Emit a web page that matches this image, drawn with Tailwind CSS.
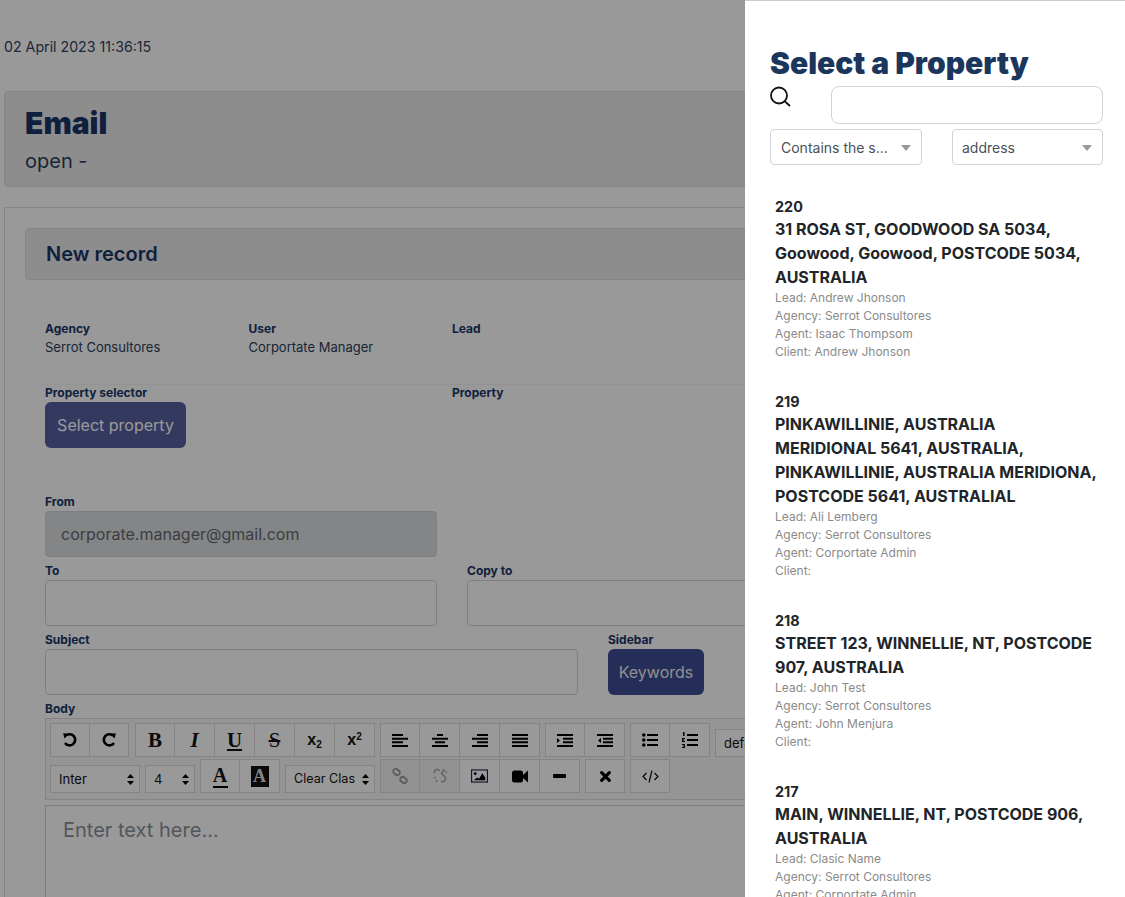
<!DOCTYPE html>
<html lang="en">
<head>
  <meta charset="UTF-8" />
  <meta name="viewport" content="width=device-width, initial-scale=1" />
  <title>Email</title>
  <script src="https://cdn.jsdelivr.net/npm/@tailwindcss/browser@4"></script>
</head>
<body class="relative h-[897px] w-[1125px] overflow-hidden bg-white font-[family-name:Inter,sans-serif] text-[#1a3668]">
  <!-- page behind the drawer -->
  <div class="w-[1125px] pl-1">
    <p class="pt-[38px] h-[91px] text-[14.2px] leading-[18px] text-[#33415c]">02 April 2023 11:36:15</p>

    <div class="h-[96px] border border-[#dedede] rounded bg-[#ececec] pl-5 pt-[13px]">
      <h1 class="text-3xl leading-9 font-black">Email</h1>
      <p class="mt-[8px] text-xl leading-6 text-[#2a3d5c]">open -</p>
    </div>

    <div class="mt-5 border border-[#dedede] pl-5 pt-5 h-[700px]">
      <div class="h-[52px] border border-[#dedede] rounded bg-[#ececec] pl-5 flex items-center">
        <h2 class="text-xl font-semibold">New record</h2>
      </div>

      <div class="ml-5">
        <div class="mt-[41px] grid grid-cols-[203.5px_203.5px_200px] text-xs">
          <div><div class="font-bold leading-[16px]">Agency</div><div class="mt-[2px] text-[13px] leading-4 text-[#2a3d5c]">Serrot Consultores</div></div>
          <div><div class="font-bold leading-[16px]">User</div><div class="mt-[2px] text-[13px] leading-4 text-[#2a3d5c]">Corportate Manager</div></div>
          <div class="font-bold leading-[16px]">Lead</div>
        </div>

        <div class="mt-[29px] w-[720px] border-t border-[#f5f5f5] grid grid-cols-[407px_200px] text-xs font-bold leading-[16px]">
          <div>
            <div>Property selector</div>
            <button class="mt-[1px] w-[141px] h-[46px] rounded-md bg-[#555f9e] text-base font-normal text-white">Select property</button>
          </div>
          <div>Property</div>
        </div>

        <label class="block mt-[46px] text-xs font-bold leading-[16px]">From</label>
        <div class="mt-[1px] w-[392px] h-[46px] border border-[#d0d4d9] rounded bg-[#dadee1] pl-[15px] flex items-center text-base text-[#64686f]">corporate.manager@gmail.com</div>

        <div class="mt-[6px] flex gap-[30px] text-xs font-bold leading-[16px]">
          <div><div>To</div><div class="mt-[1px] w-[392px] h-[46px] border border-[#d0d4d9] rounded"></div></div>
          <div><div>Copy to</div><div class="mt-[1px] w-[400px] h-[46px] border border-[#d0d4d9] rounded"></div></div>
        </div>

        <div class="mt-[6px] flex gap-[30px] text-xs font-bold leading-[16px]">
          <div><div>Subject</div><div class="mt-[1px] w-[533px] h-[46px] border border-[#d0d4d9] rounded"></div></div>
          <div>
            <div>Sidebar</div>
            <button class="mt-[1px] w-[96px] h-[46px] rounded-md bg-[#3f4b94] text-base font-normal text-[#eeeeee]">Keywords</button>
          </div>
        </div>

        <label class="block mt-[6px] text-xs font-bold leading-[16px]">Body</label>
        <div class="mt-[1px] w-[800px] h-[82px] border border-[#dcdcdc] bg-[#f8f8f8] pl-1 pt-1 text-[#111111]">
          <div class="flex gap-[5px] h-[36px]">
            <div class="flex">
              <button class="w-10 h-[34px] border border-[#dcdcdc] bg-white flex items-center justify-center">
                <svg class="w-4 h-4" viewBox="0 0 16 16" fill="none" stroke="black" stroke-width="2.600"><path d="M4 3.500 A5.600 5.600 0 1 1 3 11"/><path d="M1.200 1.200 L7 1.800 L2.400 6.600 Z" fill="black" stroke="none"/></svg>
              </button>
              <button class="-ml-px w-10 h-[34px] border border-[#dcdcdc] bg-white flex items-center justify-center">
                <svg class="w-4 h-4" viewBox="0 0 16 16" fill="none" stroke="black" stroke-width="2.600"><path d="M12 3.500 A5.600 5.600 0 1 0 13 11"/><path d="M14.800 1.200 L9 1.800 L13.600 6.600 Z" fill="black" stroke="none"/></svg>
              </button>
            </div>
            <div class="ml-px flex font-[family-name:'Liberation_Serif',serif] text-[21px] leading-none font-bold">
              <button class="w-10 h-[34px] border border-[#dcdcdc] bg-white">B</button>
              <button class="-ml-px w-[41px] h-[34px] border border-[#dcdcdc] bg-white italic">I</button>
              <button class="-ml-px w-[41px] h-[34px] border border-[#dcdcdc] bg-white underline">U</button>
              <button class="-ml-px w-[41px] h-[34px] border border-[#dcdcdc] bg-white line-through font-normal">S</button>
              <button class="-ml-px w-[41px] h-[34px] border border-[#dcdcdc] bg-white font-[family-name:'Liberation_Sans',sans-serif] text-base">x<sub class="text-[10px]">2</sub></button>
              <button class="-ml-px w-[41px] h-[34px] border border-[#dcdcdc] bg-white font-[family-name:'Liberation_Sans',sans-serif] text-base">x<sup class="text-[10px]">2</sup></button>
            </div>
            <div class="flex">
              <button class="w-10 h-[34px] border border-[#dcdcdc] bg-white flex items-center justify-center">
                <svg class="w-4 h-[13px]" preserveAspectRatio="none" viewBox="0 0 16 16"><path d="M0 0h11v2.500H0zM0 4.500h16V7H0zM0 9h11v2.500H0zM0 13.500h16V16H0z"/></svg>
              </button>
              <button class="-ml-px w-[41px] h-[34px] border border-[#dcdcdc] bg-white flex items-center justify-center">
                <svg class="w-4 h-[13px]" preserveAspectRatio="none" viewBox="0 0 16 16"><path d="M5 0h6v2.500H5zM0 4.500h16V7H0zM3 9h10v2.500H3zM0 13.500h16V16H0z"/></svg>
              </button>
              <button class="-ml-px w-[41px] h-[34px] border border-[#dcdcdc] bg-white flex items-center justify-center">
                <svg class="w-4 h-[13px]" preserveAspectRatio="none" viewBox="0 0 16 16"><path d="M5 0h11v2.500H5zM0 4.500h16V7H0zM5 9h11v2.500H5zM0 13.500h16V16H0z"/></svg>
              </button>
              <button class="-ml-px w-[41px] h-[34px] border border-[#dcdcdc] bg-white flex items-center justify-center">
                <svg class="w-4 h-[13px]" preserveAspectRatio="none" viewBox="0 0 16 16"><path d="M0 0h16v2.500H0zM0 4.500h16V7H0zM0 9h16v2.500H0zM0 13.500h16V16H0z"/></svg>
              </button>
            </div>
            <div class="flex">
              <button class="w-10 h-[34px] border border-[#dcdcdc] bg-white flex items-center justify-center">
                <svg class="w-4 h-[13px]" preserveAspectRatio="none" viewBox="0 0 16 16"><path d="M0 0h16v2.500H0zM6 4.500h10V7H6zM6 9h10v2.500H6zM0 13.500h16V16H0zM0 5l3 3-3 3z"/></svg>
              </button>
              <button class="-ml-px w-[41px] h-[34px] border border-[#dcdcdc] bg-white flex items-center justify-center">
                <svg class="w-4 h-[13px]" preserveAspectRatio="none" viewBox="0 0 16 16"><path d="M0 0h16v2.500H0zM6 4.500h10V7H6zM6 9h10v2.500H6zM0 13.500h16V16H0zM4 5L1 8l3 3z"/></svg>
              </button>
            </div>
            <div class="flex">
              <button class="w-10 h-[34px] border border-[#dcdcdc] bg-white flex items-center justify-center">
                <svg class="w-4 h-[14px]" viewBox="0 0 16 14"><circle cx="1.800" cy="2" r="1.800"/><circle cx="1.800" cy="7" r="1.800"/><circle cx="1.800" cy="12" r="1.800"/><path d="M5 1h11v2H5zM5 6h11v2H5zM5 11h11v2H5z"/></svg>
              </button>
              <button class="-ml-px w-[41px] h-[34px] border border-[#dcdcdc] bg-white flex items-center justify-center">
                <svg class="w-4 h-4" viewBox="0 0 16 16"><path d="M5 2h11v2H5zM5 7h11v2H5zM5 12h11v2H5zM1 0h1.500v4H1zM0 6h3v1.200H1.500V9H3v1H0zM0 12h3v4H0v-1h2v-.600H.800v-.800H2V13H0z"/></svg>
              </button>
            </div>
            <div class="mt-[6px] w-[80px] h-7 border border-[#dcdcdc] bg-white pl-2 text-[13px] leading-[26px]">default</div>
          </div>

          <div class="flex gap-[5px] h-[34px] text-[13px]">
            <div class="mt-[6px] w-[90px] h-7 border border-[#dcdcdc] bg-white pl-2 pr-[5px] pt-[1px] flex items-center justify-between"><span>Inter</span><svg class="w-[7px] h-[11px]" viewBox="0 0 7 11"><path d="M3.500 0L7 4H0zM3.500 11L0 7h7z"/></svg></div>
            <div class="mt-[6px] w-[50px] h-7 border border-[#dcdcdc] bg-white pl-2 pr-[5px] pt-[1px] flex items-center justify-between"><span>4</span><svg class="w-[7px] h-[11px]" viewBox="0 0 7 11"><path d="M3.500 0L7 4H0zM3.500 11L0 7h7z"/></svg></div>
            <div class="flex font-[family-name:'Liberation_Serif',serif] font-bold text-xl leading-none">
              <button class="w-10 h-[34px] border border-[#dcdcdc] bg-white"><span class="block leading-[21px]">A</span><span class="block mx-auto w-[15px] h-[2px] bg-black"></span></button>
              <button class="-ml-px w-[41px] h-[34px] border border-[#dcdcdc] bg-white flex items-center justify-center"><span class="block w-[18px] h-[21px] bg-[#111111] text-[#dddddd] text-lg leading-[21px]">A</span></button>
            </div>
            <div class="mt-[6px] w-[90px] h-7 border border-[#dcdcdc] bg-white pl-2 pr-[5px] pt-[1px] flex items-center justify-between"><span class="text-[12.600px] whitespace-nowrap">Clear Clas</span><svg class="w-[7px] h-[11px] shrink-0" viewBox="0 0 7 11"><path d="M3.500 0L7 4H0zM3.500 11L0 7h7z"/></svg></div>
            <div class="flex">
              <button class="w-10 h-[34px] border border-[#dcdcdc] bg-[#f3f3f3] flex items-center justify-center">
                <svg class="w-4 h-4" viewBox="0 0 16 16" fill="none" stroke="#999999" stroke-width="1.800"><rect x="1" y="1.500" width="7" height="5" rx="2.500" transform="rotate(40 4.500 4)"/><rect x="8" y="9.500" width="7" height="5" rx="2.500" transform="rotate(40 11.500 12)"/></svg>
              </button>
              <button class="-ml-px w-[41px] h-[34px] border border-[#dcdcdc] bg-[#f3f3f3] flex items-center justify-center">
                <svg class="w-4 h-4" viewBox="0 0 16 16" fill="none" stroke="#aaaaaa" stroke-width="1.600"><path d="M3 5C1 2 6 0 7.500 3M9 13C11 15 15 12 13 9L10 6C9 5 11 2 13 3M2 10l2-.5M4 14l1-2M12 1l-.5 1.500M15 4l-1.500.5"/></svg>
              </button>
              <button class="-ml-px w-[41px] h-[34px] border border-[#dcdcdc] bg-white flex items-center justify-center">
                <svg class="w-[17px] h-[14px]" viewBox="0 0 18 14"><rect x=".600" y=".600" width="16.800" height="12.800" fill="none" stroke="#0d2a4d" stroke-width="1.200"/><circle cx="4.500" cy="4.500" r="1.500"/><path d="M3 11.500l3.500-3 2 1.500 3.500-6 3 4.500v3z"/></svg>
              </button>
              <button class="-ml-px w-[41px] h-[34px] border border-[#dcdcdc] bg-white flex items-center justify-center">
                <svg class="w-4 h-[13px]" viewBox="0 0 16 13"><rect x="0" y=".500" width="11" height="12" rx="2.500"/><path d="M11 5l5-4.500v12L11 8z"/></svg>
              </button>
              <button class="-ml-px w-[41px] h-[34px] border border-[#dcdcdc] bg-white flex items-center justify-center">
                <span class="block w-[13px] h-1 rounded-[1px] bg-black"></span>
              </button>
            </div>
            <button class="w-10 h-[34px] border border-[#dcdcdc] bg-white flex items-center justify-center">
              <svg class="w-[11px] h-[11px]" viewBox="0 0 11 11" stroke="black" stroke-width="3.200" stroke-linecap="round"><path d="M1.700 1.700l7.600 7.600M9.300 1.700l-7.600 7.600"/></svg>
            </button>
            <button class="w-10 h-[34px] border border-[#dcdcdc] bg-white flex items-center justify-center">
              <svg class="w-[17px] h-[13px]" viewBox="0 0 17 13" fill="none" stroke="black" stroke-width="1.100"><path d="M4.500 3L1 6.500 4.500 10M12.500 3L16 6.500 12.500 10M10 .500L7 12.500"/></svg>
            </button>
          </div>
        </div>

        <div class="mt-[5px] w-[800px] h-[200px] border border-[#d0d4d9] pl-[17px] pt-[10px] text-xl leading-7 text-[#8a919c]">Enter text here...</div>
      </div>
    </div>
  </div>

  <!-- backdrop -->
  <div class="absolute inset-0 bg-black/40"></div>

  <!-- drawer -->
  <aside class="absolute top-0 right-0 bottom-0 w-[380px] border-t border-[#cccccc] bg-white pl-[25px] pr-[22px] overflow-hidden">
    <h2 class="mt-[44px] text-3xl leading-9 font-black text-[#1b365d]">Select a Property</h2>
    <div class="mt-[5px] flex">
      <svg class="w-[21px] h-[21px]" viewBox="0 0 21 21" fill="none" stroke="#111111" stroke-width="1.800"><circle cx="9" cy="9.500" r="8"/><path d="M15 15.500L20 20"/></svg>
      <div class="ml-[40px] w-[272px] h-[38px] border border-[#ced4da] rounded-lg"></div>
    </div>
    <div class="mt-[5px] flex justify-between w-[333px] text-sm text-[#495057]">
      <div class="w-[152px] h-9 border border-[#ced4da] rounded pl-[10px] pr-[10px] pt-[1px] flex items-center justify-between">
        <span>Contains the s...</span><span class="border-x-[5px] border-t-[6px] border-x-transparent border-t-[#999999]"></span>
      </div>
      <div class="w-[151px] h-9 border border-[#ced4da] rounded pl-[9px] pr-[10px] pt-[1px] flex items-center justify-between">
        <span>address</span><span class="border-x-[5px] border-t-[6px] border-x-transparent border-t-[#999999]"></span>
      </div>
    </div>

    <ul class="mt-[30px] pl-[5px] text-[#212529]">
      <li class="pb-[29px]">
        <div class="pt-[1px] text-[14.400px] leading-[21px] font-bold">220</div>
        <div class="text-base leading-6 font-[650]">31 ROSA ST, GOODWOOD SA 5034,<br />Goowood, Goowood, POSTCODE 5034,<br />AUSTRALIA</div>
        <div class="text-xs leading-[18px] text-[#8a8a8a]">Lead: Andrew Jhonson<br />Agency: Serrot Consultores<br />Agent: Isaac Thompsom<br />Client: Andrew Jhonson</div>
      </li>
      <li class="pb-[29px]">
        <div class="pt-[1px] text-[14.400px] leading-[21px] font-bold">219</div>
        <div class="text-base leading-6 font-[650]">PINKAWILLINIE, AUSTRALIA<br />MERIDIONAL 5641, AUSTRALIA,<br />PINKAWILLINIE, AUSTRALIA MERIDIONA,<br />POSTCODE 5641, AUSTRALIAL</div>
        <div class="text-xs leading-[18px] text-[#8a8a8a]">Lead: Ali Lemberg<br />Agency: Serrot Consultores<br />Agent: Corportate Admin<br />Client:</div>
      </li>
      <li class="pb-[29px]">
        <div class="pt-[1px] text-[14.400px] leading-[21px] font-bold">218</div>
        <div class="text-base leading-6 font-[650]">STREET 123, WINNELLIE, NT, POSTCODE<br />907, AUSTRALIA</div>
        <div class="text-xs leading-[18px] text-[#8a8a8a]">Lead: John Test<br />Agency: Serrot Consultores<br />Agent: John Menjura<br />Client:</div>
      </li>
      <li class="pb-[29px]">
        <div class="pt-[1px] text-[14.400px] leading-[21px] font-bold">217</div>
        <div class="text-base leading-6 font-[650]">MAIN, WINNELLIE, NT, POSTCODE 906,<br />AUSTRALIA</div>
        <div class="text-xs leading-[18px] text-[#8a8a8a]">Lead: Clasic Name<br />Agency: Serrot Consultores<br />Agent: Corportate Admin<br />Client:</div>
      </li>
    </ul>
  </aside>
</body>
</html>
